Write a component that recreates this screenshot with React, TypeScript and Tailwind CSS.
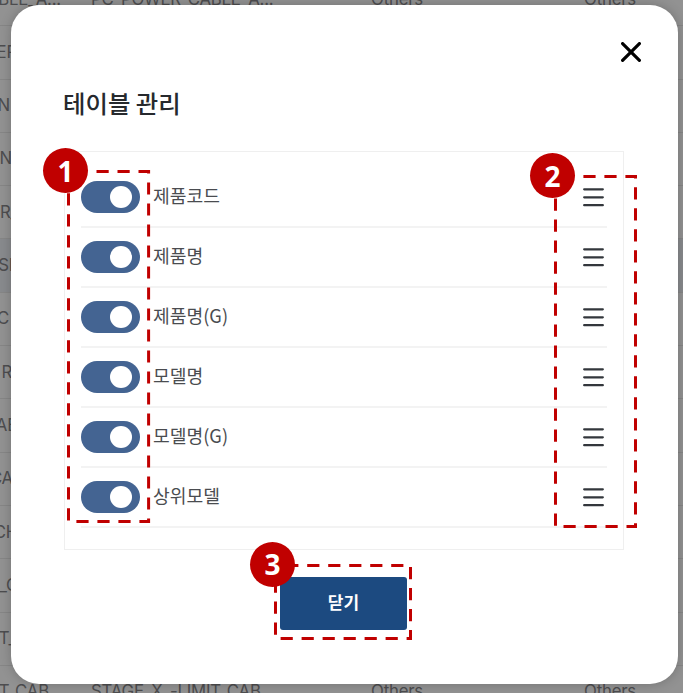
import React from "react";

type Column = { id: string; label: string };

const columns: Column[] = [
  { id: "code", label: "제품코드" },
  { id: "name", label: "제품명" },
  { id: "nameG", label: "제품명(G)" },
  { id: "model", label: "모델명" },
  { id: "modelG", label: "모델명(G)" },
  { id: "parent", label: "상위모델" },
];

type Row = { code: string; name?: string; cut: string; active?: boolean };

// `cut` is the width at which each right-aligned code cell ends.
const rows: Row[] = [
  { code: "BLE_A...", name: "PC_POWER_CABLE_A...", cut: "w-[61px]" },
  { code: "ER", cut: "w-[17px]" },
  { code: "N", cut: "w-[10px]" },
  { code: "N", cut: "w-[12px]" },
  { code: "R_", cut: "w-[18px]" },
  { code: "SI", cut: "w-[13px]", active: true },
  { code: "C", cut: "w-[9px]" },
  { code: "R", cut: "w-[12px]" },
  { code: "AB", cut: "w-[18px]" },
  { code: "CA", cut: "w-[13px]" },
  { code: "CH", cut: "w-[18px]" },
  { code: "_C", cut: "w-[18px]" },
  { code: "T_", cut: "w-[16px]" },
  { code: "T_CAB", name: "STAGE_X_-LIMIT_CAB", cut: "w-[49px]" },
];

function BackgroundTable() {
  return (
    <div className="-mt-[27px] bg-[#929292] font-['Inter','Noto_Sans_CJK_KR',sans-serif] text-[16.8px] tracking-[-0.2px] text-[#4d4d4f]">
      {rows.map((row, i) => (
        <div
          key={i}
          className={
            "flex h-[53.3px] items-center whitespace-nowrap border-b border-[#868686] " +
            (row.active ? "bg-[#888a8d]" : "")
          }
        >
          <div className={"flex shrink-0 justify-end " + row.cut}>{row.code}</div>
          {row.name && (
            <div className="flex flex-1">
              <div className={i === 0 ? "ml-[30px] w-[280px]" : "ml-[42px] w-[280px]"}>{row.name}</div>
              <div className="w-[213px]">Others</div>
              <div>Others</div>
            </div>
          )}
        </div>
      ))}
    </div>
  );
}

function Toggle() {
  return (
    <button className="flex h-8 w-[59px] shrink-0 items-center justify-end rounded-full bg-[#446492] pr-[8px]">
      <span className="size-[22px] rounded-full bg-white" />
    </button>
  );
}

function Handle() {
  return (
    <svg className="mr-[3px] h-5 w-[21px]" viewBox="0 0 21 20" stroke="#33373c" strokeWidth="2.3" strokeLinecap="round">
      <path d="M1.2 2.3h18.6M1.2 10.3h18.6M1.2 18.2h18.6" />
    </svg>
  );
}

function Modal() {
  return (
    <div className="absolute left-[11px] top-[5px] flex h-[679px] w-[666.5px] flex-col rounded-[28px] bg-white px-[53px] shadow-[0_0_12px_rgba(0,0,0,0.22)]">
      <div className="flex h-[78px] justify-end pt-[37px]">
        <svg
          className="-mr-[16px] size-5"
          viewBox="0 0 20 20"
          fill="none"
          stroke="#000"
          strokeWidth="3.2"
          strokeLinecap="round"
        >
          <path d="M1.6 1.6 18.4 18.4M18.4 1.6 1.6 18.4" />
        </svg>
      </div>
      <h2 className="-ml-px h-[68px] text-[24.4px] font-medium leading-[40px] text-[#26292d]">테이블 관리</h2>
      <div className="h-[399px] w-[560px] border-[1.5px] border-[#efefef] px-[16px] pt-[16px]">
        {columns.map((c) => (
          <div key={c.id} className="flex h-[60px] items-center border-b-2 border-[#f3f3f3]">
            <Toggle />
            <span className="ml-[13px] flex-1 pb-[5px] text-[18.2px] leading-6 text-[#4a4c50]">{c.label}</span>
            <Handle />
          </div>
        ))}
      </div>
      <button className="ml-[216px] mt-[27px] h-[53px] w-[127px] rounded-[3px] bg-[#1c4a80] pb-[3px] text-[17px] font-bold text-white">
        닫기
      </button>
    </div>
  );
}

function Badge({ n, place }: { n: number; place: string }) {
  return (
    <div
      className={
        "absolute flex size-[45px] items-center justify-center rounded-full bg-[#c00000] font-['Open_Sans',sans-serif] text-[28px] font-bold leading-none text-white " +
        place
      }
    >
      {n}
    </div>
  );
}

function Annotations() {
  return (
    <>
      <svg
        className="absolute left-0 top-0"
        width="683"
        height="693"
        fill="none"
        stroke="#c00000"
        strokeWidth="3"
        strokeDasharray="12.2 8.8"
      >
        <path d="M96.5 171.5H148.6V521.4H68.5V171.5" />
        <path d="M583.4 176.4H635.5V526.5H555.5V176.4" />
        <path d="M307.2 565.4H410.5V638.4H275.5V565.4H298.4" />
      </svg>
      <Badge n={1} place="left-[43px] top-[148px]" />
      <Badge n={2} place="left-[530px] top-[153px]" />
      <Badge n={3} place="left-[250px] top-[541.5px]" />
    </>
  );
}

export default function App() {
  return (
    <div className="relative h-[693px] w-[683px] overflow-hidden bg-[#929292] font-['Noto_Sans_CJK_KR',sans-serif]">
      <BackgroundTable />
      <Modal />
      <Annotations />
    </div>
  );
}
